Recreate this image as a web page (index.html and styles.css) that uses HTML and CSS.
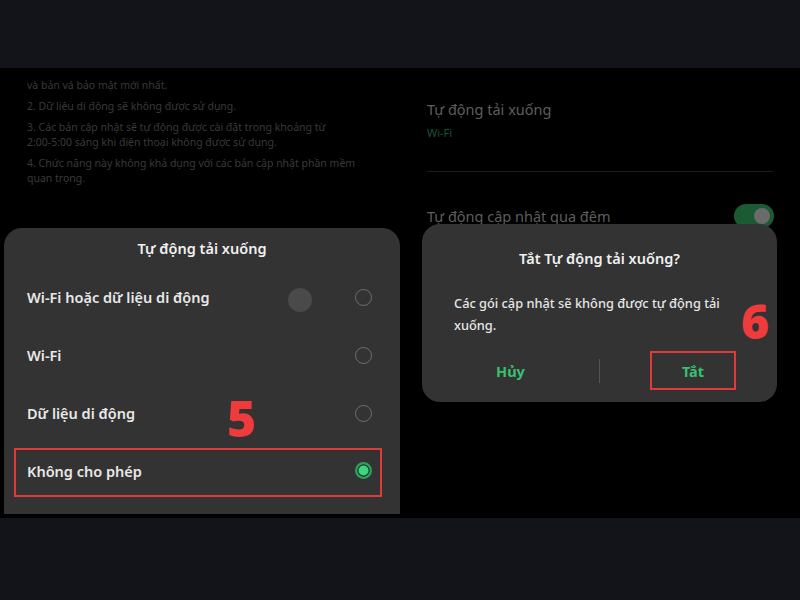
FILE: index.html
```html
<!DOCTYPE html>
<html lang="vi">
<head>
    <meta charset="UTF-8">
    <meta name="viewport" content="width=device-width, initial-scale=1.0">
    <title>Tự động tải xuống</title>
    <link rel="stylesheet" href="styles.css">
</head>
<body>
    <div class="band"></div>
    <main class="shots">
        <!-- left phone: choose the download mode -->
        <section class="shot shot-left">
            <div class="notes">
                <p>và bản vá bảo mật mới nhất.</p>
                <p>2. Dữ liệu di động sẽ không được sử dụng.</p>
                <p>3. Các bản cập nhật sẽ tự động được cài đặt trong khoảng từ <span class="time">2:00-5:00</span> sáng khi điện thoại không được sử dụng.</p>
                <p>4. Chức năng này không khả dụng với các bản cập nhật phần mềm quan trọng.</p>
            </div>
            <div class="sheet">
                <h2 class="sheet-title">Tự động tải xuống</h2>
                <div class="option">
                    <span>Wi-Fi hoặc dữ liệu di động</span>
                    <span class="ripple"></span>
                    <span class="radio"></span>
                </div>
                <div class="option">
                    <span>Wi-Fi</span>
                    <span class="radio"></span>
                </div>
                <div class="option">
                    <span>Dữ liệu di động</span>
                    <span class="radio"></span>
                </div>
                <div class="option marked">
                    <span>Không cho phép</span>
                    <span class="radio checked"></span>
                </div>
                <span class="step step-5">5</span>
            </div>
        </section>

        <!-- right phone: confirm turning it off -->
        <section class="shot shot-right">
            <div class="setting">
                <div class="setting-name">Tự động tải xuống</div>
                <div class="setting-value">Wi-Fi</div>
            </div>
            <div class="divider"></div>
            <div class="setting setting-row">
                <div class="setting-name">Tự động cập nhật qua đêm</div>
                <span class="switch"></span>
            </div>
            <div class="dialog">
                <h2 class="dialog-title">Tắt Tự động tải xuống?</h2>
                <p class="dialog-text">Các gói cập nhật sẽ không được tự động tải xuống.</p>
                <div class="dialog-actions">
                    <button class="action">Hủy</button>
                    <span class="action-sep"></span>
                    <button class="action marked">Tắt</button>
                </div>
                <span class="step step-6">6</span>
            </div>
        </section>
    </main>
    <div class="band band-bottom"></div>
</body>
</html>
```

FILE: styles.css
```css
* {
    box-sizing: border-box;
}
body {
    margin: 0;
    width: 800px;
    height: 600px;
    background-color: #000;
    font-family: "Noto Sans", "Open Sans", sans-serif;
    overflow: hidden;
}
.band {
    height: 68px;
    background-color: #131419;
}
.band-bottom {
    height: 82px;
}
.shots {
    height: 450px;
    display: flex;
    background-color: #000;
}
.shot {
    position: relative;
    display: flex;
    flex-direction: column;
}
.shot-left {
    width: 404px;
    padding: 0 4px 4px 4px;
}
.shot-right {
    flex: 1;
    padding: 0 27px 0 23px;
}

/* faded text behind the sheet */
.notes {
    height: 160px;
    overflow: hidden;
    padding: 10px 42px 0 23px;
    color: #3a3a3a;
    font-size: 10.5px;
    line-height: 15px;
}
.notes p {
    margin: 0 0 6px 0;
}
.notes .time {
    white-space: nowrap;
}
.sheet {
    position: relative;
    margin-top: auto;
    height: 286px;
    background-color: #333333;
    border-radius: 18px 18px 0 0;
    padding: 10px 0 0 0;
}
.sheet-title {
    margin: 0 0 22px 0;
    text-align: center;
    font-size: 14.5px;
    font-weight: 600;
    color: #f0f0f0;
}
.option {
    position: relative;
    display: flex;
    align-items: center;
    justify-content: space-between;
    height: 58px;
    margin: 0 10px;
    padding: 0 18px 0 13px;
    color: #e8e8e8;
    font-size: 14.5px;
    font-weight: 600;
}
.option:first-of-type {
    margin-top: -12px;
}
.radio {
    width: 17px;
    height: 17px;
    border: 1.5px solid #6f6f6f;
    border-radius: 50%;
}
.radio.checked {
    border: 2px solid #2f9e5c;
    background-color: #3fd47f;
    box-shadow: inset 0 0 0 1.5px #1e3a2a;
}
.ripple {
    position: absolute;
    left: 274px;
    top: 20px;
    width: 24px;
    height: 24px;
    border-radius: 50%;
    background-color: #4a4a4a;
}
.option.marked {
    height: 49px;
    margin: 6px 18px 0 10px;
    padding: 0 10px 4px 13px;
    outline: 2.5px solid #e23a3a;
    outline-offset: -2px;
}
.step {
    position: absolute;
    color: #ef3b3b;
    font-family: "Open Sans", "Noto Sans", sans-serif;
    font-weight: 800;
    line-height: 1;
}
.step-5 {
    left: 223px;
    top: 165px;
    font-size: 50px;
}

/* settings list on the right */
.setting {
    padding-top: 30px;
}
.setting-name {
    color: #5e5e5e;
    font-size: 14.5px;
    line-height: 22px;
}
.setting-value {
    margin-top: 4px;
    color: #1d5336;
    font-size: 11px;
    line-height: 18px;
}
.divider {
    margin-top: 29px;
    border-top: 1px solid #1c1c1c;
}
.setting-row {
    display: flex;
    justify-content: space-between;
    align-items: center;
    padding-top: 32px;
}
.switch {
    position: relative;
    width: 40px;
    height: 24px;
    margin-right: -1px;
    border-radius: 12px;
    background-color: #1b5a33;
}
.switch::after {
    content: "";
    position: absolute;
    right: 4px;
    top: 4px;
    width: 16px;
    height: 16px;
    border-radius: 50%;
    background-color: #6b6b6b;
}
.dialog {
    position: absolute;
    left: 18px;
    top: 156px;
    width: 355px;
    height: 178px;
    background-color: #333333;
    border-radius: 18px;
    padding: 24px 32px 0 32px;
}
.dialog-title {
    margin: 0;
    text-align: center;
    color: #f0f0f0;
    font-size: 14.5px;
    font-weight: 600;
}
.dialog-text {
    margin: 24px 0 0 0;
    width: 285px;
    color: #e6e6e6;
    font-size: 12.8px;
    line-height: 22px;
    font-weight: 500;
}
.dialog-actions {
    display: flex;
    align-items: center;
    margin: 15px -32px 0 -32px;
}
.action {
    width: 177px;
    background: none;
    border: none;
    font-family: inherit;
    color: #39c072;
    font-size: 14.5px;
    font-weight: 700;
    padding: 0;
    height: 39px;
}
.action-sep {
    width: 1px;
    height: 24px;
    background-color: #555;
}
.action.marked {
    width: 86px;
    margin-left: 50px;
    outline: 2.5px solid #e23a3a;
    outline-offset: -2px;
}
.step-6 {
    left: 319px;
    top: 73px;
    font-size: 48px;
}
```
